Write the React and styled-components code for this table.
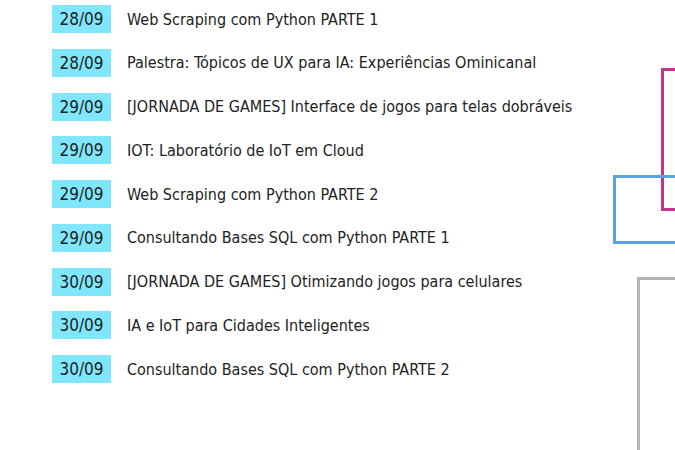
import styled, { createGlobalStyle } from 'styled-components';

const GlobalStyle = createGlobalStyle`
  html, body {
    margin: 0;
    padding: 0;
    background: #fff;
  }
  body {
    font-family: "DejaVu Sans Condensed", "DejaVu Sans", sans-serif;
    color: #222;
  }
`;

const Page = styled.div`
  position: relative;
  width: 675px;
  height: 450px;
  overflow: hidden;
  background: #fff;
`;

const List = styled.ul`
  list-style: none;
  margin: 0;
  padding: 5px 0 0 52px;
  display: flex;
  flex-direction: column;
  gap: 15.75px;
`;

const Row = styled.li`
  display: flex;
  align-items: center;
  gap: 16px;
  height: 28px;
`;

const DateBadge = styled.span`
  display: flex;
  align-items: center;
  justify-content: center;
  width: 59px;
  height: 28px;
  background: #80e6fb;
  color: #1e1e1e;
  font-size: 17px;
`;

const Title = styled.span`
  font-size: 16px;
  color: #222;
  white-space: nowrap;
`;

// decorative outlined frames on the right edge
const Frame = styled.div`
  position: absolute;
  left: ${p => p.$left}px;
  top: ${p => p.$top}px;
  width: 100px;
  height: ${p => p.$height}px;
  border: 3px solid ${p => p.$color};
  box-sizing: border-box;
  ${p => p.$open && 'border-right: none; border-bottom: none;'}
`;

const events = [
  { date: '28/09', title: 'Web Scraping com Python PARTE 1' },
  { date: '28/09', title: 'Palestra: Tópicos de UX para IA: Experiências Ominicanal' },
  { date: '29/09', title: '[JORNADA DE GAMES] Interface de jogos para telas dobráveis' },
  { date: '29/09', title: 'IOT: Laboratório de IoT em Cloud' },
  { date: '29/09', title: 'Web Scraping com Python PARTE 2' },
  { date: '29/09', title: 'Consultando Bases SQL com Python PARTE 1' },
  { date: '30/09', title: '[JORNADA DE GAMES] Otimizando jogos para celulares' },
  { date: '30/09', title: 'IA e IoT para Cidades Inteligentes' },
  { date: '30/09', title: 'Consultando Bases SQL com Python PARTE 2' },
];

const App = () => (
  <Page>
    <GlobalStyle />
    <List>
      {events.map((ev, i) => (
        <Row key={i}>
          <DateBadge>{ev.date}</DateBadge>
          <Title>{ev.title}</Title>
        </Row>
      ))}
    </List>
    <Frame $left={661} $top={68} $height={143} $color="#c5338a" />
    <Frame $left={613} $top={175} $height={69} $color="#5aa3e0" />
    <Frame $left={637} $top={277} $height={200} $color="#b3b3b3" $open />
  </Page>
);

export default App;
